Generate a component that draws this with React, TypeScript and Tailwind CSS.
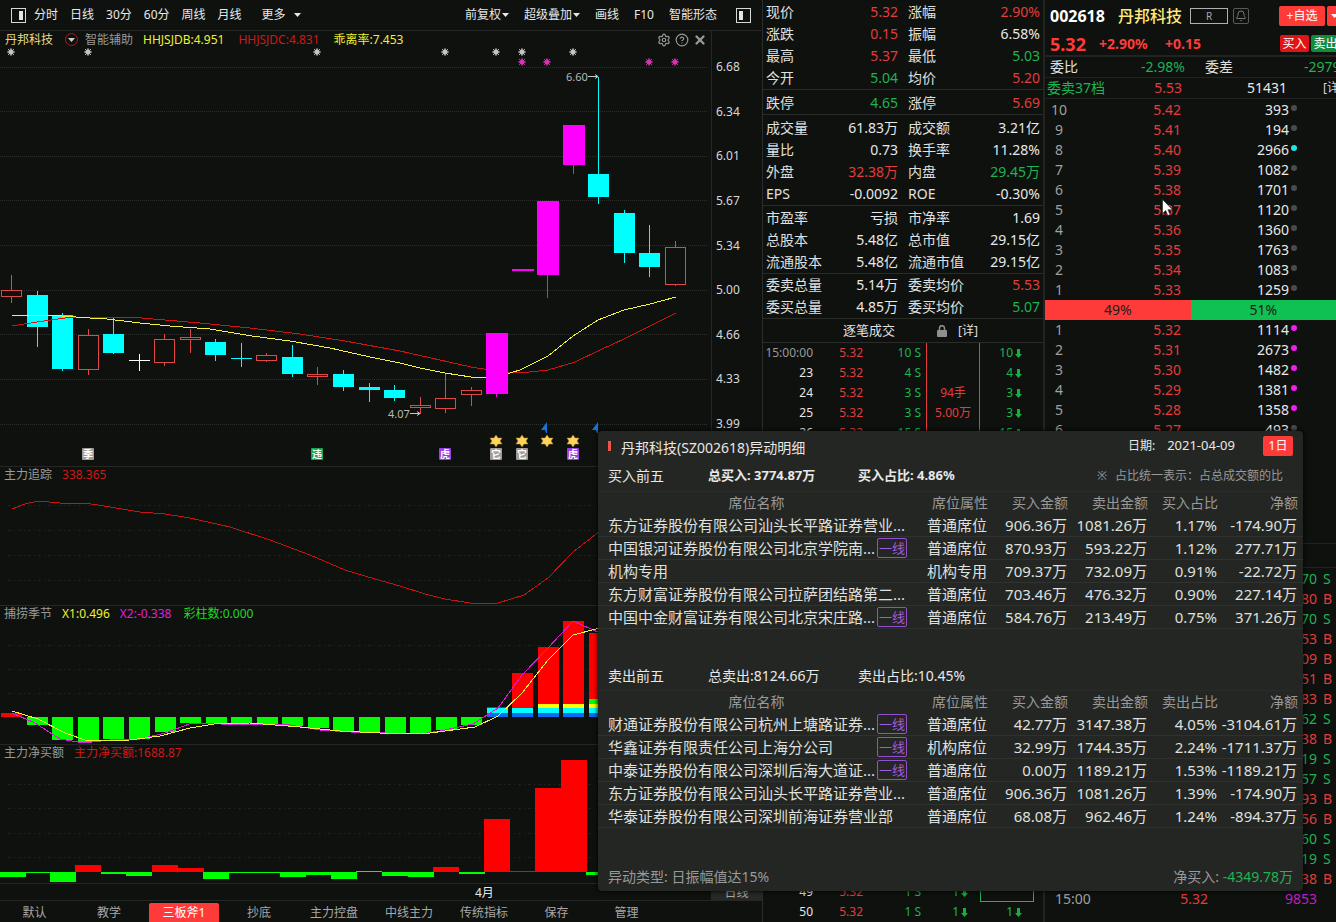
import { Bell, CircleHelp, Settings, X } from 'lucide-react';
import React from 'react';

type Candle = [x: number, top: number, bottom: number, high: number, low: number, kind: string];

const candles: Candle[] = [
  [1, 290, 297, 275, 303, 'up'],
  [27, 295, 327, 291, 347, 'down'],
  [52, 315, 369, 313, 371, 'down'],
  [78, 335, 370, 329, 375, 'up'],
  [103, 334, 353, 318, 354, 'down'],
  [129, 360, 361, 354, 371, 'flat'],
  [154, 339, 363, 334, 366, 'up'],
  [180, 337, 340, 329, 353, 'up'],
  [205, 342, 355, 339, 361, 'down'],
  [231, 358, 359, 343, 367, 'down'],
  [256, 355, 361, 353, 362, 'up'],
  [282, 357, 374, 345, 377, 'down'],
  [307, 374, 377, 367, 385, 'up'],
  [333, 374, 387, 370, 391, 'down'],
  [359, 387, 390, 383, 402, 'down'],
  [384, 390, 398, 385, 401, 'down'],
  [410, 405, 408, 397, 414, 'up'],
  [435, 398, 409, 374, 413, 'up'],
  [461, 390, 395, 387, 406, 'up'],
  [486, 333, 394, 333, 397, 'limit'],
  [512, 269, 271, 269, 271, 'limit'],
  [537, 201, 275, 201, 298, 'limit'],
  [563, 125, 165, 125, 174, 'limit'],
  [588, 174, 197, 77, 204, 'down'],
  [614, 213, 253, 210, 263, 'down'],
  [639, 253, 267, 225, 277, 'down'],
  [665, 247, 285, 241, 286, 'up'],
];

const candleColors: Record<string, string> = {
  up: '#e04848',
  down: '#00ffff',
  flat: '#ffffff',
  limit: '#ff00ff',
};

const priceLabels = ['6.68', '6.34', '6.01', '5.67', '5.34', '5.00', '4.66', '4.33', '3.99'];
const priceLines = [67, 111, 156, 200, 245, 290, 334, 379, 424];

// [x, y] of the bottom edge, bars hang from the zero line at 717
const greenBars = [
  [27, 725], [52, 740], [78, 742], [103, 739], [129, 739], [155, 732], [180, 723], [206, 723],
  [231, 723], [257, 724], [282, 726], [308, 728], [333, 731], [359, 733], [385, 733], [410, 733],
  [436, 730], [461, 725],
];

const redBars = [
  [487, 707], [512, 673], [538, 647], [563, 621], [589, 633],
];

// [x, top, bottom, isBuy]
const netBars = [
  [0, 872, 877, 0], [25, 872, 873, 0], [50, 872, 882, 0], [75, 865, 872, 1], [101, 872, 874, 0],
  [126, 872, 876, 0], [152, 865, 872, 1], [178, 868, 872, 1], [203, 872, 879, 0], [229, 872, 873, 0],
  [254, 872, 873, 0], [280, 872, 877, 0], [306, 872, 875, 0], [331, 872, 879, 0], [356, 871, 872, 0],
  [382, 872, 876, 0], [408, 872, 877, 0], [433, 867, 872, 1], [459, 872, 874, 0], [484, 819, 872, 1],
  [510, 871, 872, 1], [535, 788, 872, 1], [561, 760, 872, 1], [586, 872, 875, 0],
];

type Stat = [label: string, value: string, tone: string];

const R = 'text-[#e23c3c]';
const G = 'text-[#1fb352]';
const W = 'text-[#e8e8e8]';

const statGroups: { className: string; rows: [Stat, Stat][] }[] = [
  {
    className: 'pt-px',
    rows: [
      [['现价', '5.32', R], ['涨幅', '2.90%', R]],
      [['涨跌', '0.15', R], ['振幅', '6.58%', W]],
      [['最高', '5.37', R], ['最低', '5.03', G]],
      [['今开', '5.04', G], ['均价', '5.20', R]],
    ],
  },
  { className: 'pt-0.5', rows: [[['跌停', '4.65', G], ['涨停', '5.69', R]]] },
  {
    className: 'pt-0.5',
    rows: [
      [['成交量', '61.83万', W], ['成交额', '3.21亿', W]],
      [['量比', '0.73', W], ['换手率', '11.28%', W]],
      [['外盘', '32.38万', R], ['内盘', '29.45万', G]],
      [['EPS', '-0.0092', W], ['ROE', '-0.30%', W]],
    ],
  },
  {
    className: 'pt-px',
    rows: [
      [['市盈率', '亏损', W], ['市净率', '1.69', W]],
      [['总股本', '5.48亿', W], ['总市值', '29.15亿', W]],
      [['流通股本', '5.48亿', W], ['流通市值', '29.15亿', W]],
    ],
  },
  {
    className: '',
    rows: [
      [['委卖总量', '5.14万', W], ['委卖均价', '5.53', R]],
      [['委买总量', '4.85万', W], ['委买均价', '5.07', G]],
    ],
  },
];

const GRAY = 'bg-[#4a4b4e]';
const CYAN = 'bg-[#1fe5e5]';
const PINK = 'bg-[#f01cf0]';

const asks = [
  ['10', '5.42', '393', GRAY],
  ['9', '5.41', '194', GRAY],
  ['8', '5.40', '2966', CYAN],
  ['7', '5.39', '1082', GRAY],
  ['6', '5.38', '1701', GRAY],
  ['5', '5.37', '1120', GRAY],
  ['4', '5.36', '1360', GRAY],
  ['3', '5.35', '1763', GRAY],
  ['2', '5.34', '1083', GRAY],
  ['1', '5.33', '1259', GRAY],
];

const bids = [
  ['1', '5.32', '1114', PINK],
  ['2', '5.31', '2673', PINK],
  ['3', '5.30', '1482', PINK],
  ['4', '5.29', '1381', PINK],
  ['5', '5.28', '1358', PINK],
  ['6', '5.27', '493', GRAY],
];

const trades = [
  ['70', 'S'], ['80', 'B'], ['70', 'S'], ['53', 'B'], ['09', 'B'], ['51', 'B'], ['83', 'B'], ['62', 'S'],
  ['38', 'B'], ['19', 'S'], ['57', 'S'], ['93', 'B'], ['56', 'B'], ['60', 'S'], ['19', 'S'], ['38', 'B'],
];

const ticks = [
  ['15:00:00', '10', ''],
  ['23', '4', ''],
  ['24', '3', '94手'],
  ['25', '3', '5.00万'],
  ['26', '15', ''],
];

type Seat = { name: string; tag?: boolean; kind: string; cells: string[] };

const buySeats: Seat[] = [
  { name: '东方证券股份有限公司汕头长平路证券营业...', kind: '普通席位', cells: ['906.36万', '1081.26万', '1.17%', '-174.90万'] },
  { name: '中国银河证券股份有限公司北京学院南...', tag: true, kind: '普通席位', cells: ['870.93万', '593.22万', '1.12%', '277.71万'] },
  { name: '机构专用', kind: '机构专用', cells: ['709.37万', '732.09万', '0.91%', '-22.72万'] },
  { name: '东方财富证券股份有限公司拉萨团结路第二...', kind: '普通席位', cells: ['703.46万', '476.32万', '0.90%', '227.14万'] },
  { name: '中国中金财富证券有限公司北京宋庄路...', tag: true, kind: '普通席位', cells: ['584.76万', '213.49万', '0.75%', '371.26万'] },
];

const sellSeats: Seat[] = [
  { name: '财通证券股份有限公司杭州上塘路证券...', tag: true, kind: '普通席位', cells: ['42.77万', '3147.38万', '4.05%', '-3104.61万'] },
  { name: '华鑫证券有限责任公司上海分公司', tag: true, kind: '机构席位', cells: ['32.99万', '1744.35万', '2.24%', '-1711.37万'] },
  { name: '中泰证券股份有限公司深圳后海大道证...', tag: true, kind: '普通席位', cells: ['0.00万', '1189.21万', '1.53%', '-1189.21万'] },
  { name: '东方证券股份有限公司汕头长平路证券营业...', kind: '普通席位', cells: ['906.36万', '1081.26万', '1.39%', '-174.90万'] },
  { name: '华泰证券股份有限公司深圳前海证券营业部', kind: '普通席位', cells: ['68.08万', '962.46万', '1.24%', '-894.37万'] },
];

const Caret = () => (
  <svg className="h-1 w-[7px] shrink-0" viewBox="0 0 7 4">
    <path d="M0 0h7L3.5 4z" fill="currentColor" />
  </svg>
);

const DownArrow = () => (
  <svg className="ml-0.5 inline-block h-[9px] w-[7px] align-[-1px]" viewBox="0 0 7 9">
    <path d="M2 0h3v5h2L3.5 9 0 5h2z" fill="#12b23a" />
  </svg>
);

const PanelIcon = ({ side }: { side: 'left' | 'right' }) => (
  <svg className="h-[15px] w-[15px] shrink-0" viewBox="0 0 15 15">
    <rect x="0.5" y="0.5" width="14" height="14" fill="none" stroke="#d8d8d8" />
    <rect x={side === 'right' ? 8 : 3} y="3" width="4" height="9" fill="#e4e4e4" />
  </svg>
);

const Toolbar = () => (
  <div className="flex h-[31px] items-center justify-between border-b border-[#242724] pr-[11px] pl-[11px] text-xs text-[#e8e8e8]">
    <div className="flex items-center gap-3">
      <div className="flex items-center gap-2">
        <button aria-label="左侧栏">
          <PanelIcon side="right" />
        </button>
        <button>分时</button>
      </div>
      <button>日线</button>
      <button>30分</button>
      <button>60分</button>
      <button>周线</button>
      <button>月线</button>
      <button className="ml-2 flex items-center gap-2">
        更多 <Caret />
      </button>
    </div>
    <div className="flex items-center gap-[15px]">
      <button className="flex items-center gap-px">
        前复权
        <Caret />
      </button>
      <button className="flex items-center gap-px">
        超级叠加
        <Caret />
      </button>
      <button>画线</button>
      <button>F10</button>
      <button>智能形态</button>
      <button aria-label="右侧栏" className="ml-1">
        <PanelIcon side="left" />
      </button>
    </div>
  </div>
);

const Sparkle = ({ x, y, color }: { x: number; y: number; color: string }) => (
  <g stroke={color} fill={color}>
    <circle cx={x} cy={y} r="2.2" />
    <path
      d={`M${x - 4} ${y}h8M${x} ${y - 4}v8M${x - 3} ${y - 3}l6 6M${x + 3} ${y - 3}l-6 6`}
      strokeWidth="0.9"
    />
  </g>
);

const Badge = ({ x, fill, text }: { x: number; fill: string; text: string }) => (
  <g>
    <rect x={x - 6} y="448" width="12" height="12" rx="1" fill={fill} />
    <text x={x} y="458" fontSize="10" fontWeight="700" textAnchor="middle" fill="#ffffff">
      {text}
    </text>
  </g>
);

const CandleShape = ({ candle }: { candle: Candle }) => {
  const [x, top, bottom, high, low, kind] = candle;
  const color = candleColors[kind];
  const width = kind === 'limit' ? 22 : 21;
  const mid = x + 10;

  if (kind === 'up') {
    return (
      <g>
        <rect x={mid} y={high} width="1" height={top - high} fill={color} />
        <rect x={mid} y={bottom} width="1" height={low - bottom} fill={color} />
        <rect x={x + 0.5} y={top + 0.5} width="20" height={bottom - top - 1} fill="none" stroke={color} />
      </g>
    );
  }
  return (
    <g fill={color}>
      <rect x={mid} y={high} width="1" height={low - high} />
      <rect x={x} y={top} width={width} height={bottom - top} />
    </g>
  );
};

const Curve = ({ points, color }: { points: string; color: string }) => (
  <polyline points={points} fill="none" stroke={color} shapeRendering="crispEdges" />
);

const PriceChart = () => (
  <svg className="h-[418px] w-full" viewBox="0 48 700 418" preserveAspectRatio="xMinYMin meet">
    {priceLines.map((y) => (
      <line key={y} x1="0" x2="708" y1={y + 0.5} y2={y + 0.5} stroke="#2b2e2b" strokeDasharray="1 1" />
    ))}
    {[11, 88, 317, 445, 496, 522, 573].map((x) => (
      <Sparkle key={x} x={x} y={52} color="#c4c4c4" />
    ))}
    {[522, 547, 649, 675].map((x) => (
      <Sparkle key={x} x={x} y={62} color="#d535b0" />
    ))}
    {candles.filter((c) => c[5] !== 'limit').map((c) => (
      <CandleShape key={c[0]} candle={c} />
    ))}
    <Curve
      points="12,326 37,322 65,318 90,317 130,317 165,320 200,323 250,328 300,334 345,341 400,351 440,360 471,367 496,371 520,373 548,370 575,362 600,350 624,339 650,326 676,313"
      color="#d01414"
    />
    <Curve
      points="12,316 27,315 48,315 90,318 107,319 140,323 170,326 210,329 252,336 290,341 330,348 370,357 400,363 420,368 445,373 471,377 496,377 520,370 548,356 573,336 598,320 624,310 650,304 676,297"
      color="#f4f43c"
    />
    {candles.filter((c) => c[5] === 'limit').map((c) => (
      <CandleShape key={c[0]} candle={c} />
    ))}
    <g fill="#b8b8b8" fontSize="11">
      <text x="566" y="81">6.60</text>
      <text x="388" y="418">4.07</text>
    </g>
    <g stroke="#c8c8c8" fill="none">
      <path d="M588 76.5h10M595 74.5l3 2-3 2" />
      <path d="M410 413.5h10M417 411.5l3 2-3 2" />
    </g>
    {[547, 598].map((x) => (
      <path key={x} d={`M${x} 422l-6 8h4l1 3h1z`} fill="#1673e0" />
    ))}
    {[496, 522, 547, 573].map((x) => (
      <path
        key={x}
        d={`M${x} 435l2 3h4l-2 3 2 3h-4l-2 3-2-3h-4l2-3-2-3h4z`}
        fill="#ffd45a"
        stroke="#b08a30"
        strokeWidth="0.5"
      />
    ))}
    <Badge x={88} fill="#9c9c9c" text="季" />
    <Badge x={317} fill="#12a84a" text="违" />
    <Badge x={445} fill="#9c3fe0" text="虎" />
    <Badge x={496} fill="#9c9c9c" text="它" />
    <Badge x={522} fill="#9c9c9c" text="它" />
    <Badge x={573} fill="#9c3fe0" text="虎" />
  </svg>
);

const SubGrid = ({ lines }: { lines: number[] }) => (
  <>
    {lines.map((y) => (
      <line key={y} x1="8" x2="704" y1={y + 0.5} y2={y + 0.5} stroke="#1e211e" strokeDasharray="3 3 1 3" />
    ))}
  </>
);

const SubPanel = ({ label, children }: { label: React.ReactNode; children: React.ReactNode }) => (
  <section className="flex h-[139px] border-b border-[#242724]">
    <div className="min-w-0 flex-1 border-r border-[#242724]">
      <div className="flex h-3.5 gap-2.5 pl-1 text-xs leading-[15px] text-[#9a9a9a]">{label}</div>
      {children}
    </div>
    <div className="w-[50px]" />
  </section>
);

const ChartColumn = () => (
  <main className="flex min-w-0 flex-1 flex-col border-r border-[#2b2d2b]">
    <Toolbar />
    <section className="flex h-[436px] border-b border-[#242724]">
      <div className="min-w-0 flex-1 border-r border-[#242724]">
        <div className="flex h-[17px] items-center justify-between pr-1 pl-[5px] text-xs leading-4 text-[#9a9a9a]">
          <div className="flex items-center gap-2.5 whitespace-nowrap">
            <span className="text-[#e6d98a]">丹邦科技</span>
            <div className="ml-0.5 flex items-center gap-[7px]">
              <button
                aria-label="切换指标"
                className="flex h-[13px] w-[13px] items-center justify-center rounded-full border border-[#9c2020] text-[#d0d0d0]"
              >
                <Caret />
              </button>
              <span>智能辅助</span>
            </div>
            <span className="text-[#f0f030]">HHJSJDB:4.951</span>
            <span className="ml-1 text-[#d01818]">HHJSJDC:4.831</span>
            <span className="ml-1 text-[#f0f030]">乖离率:7.453</span>
          </div>
          <div className="flex gap-1 text-[#989898]">
            <button aria-label="设置"><Settings size={14} /></button>
            <button aria-label="帮助"><CircleHelp size={14} /></button>
            <button aria-label="关闭"><X size={14} strokeWidth={4} /></button>
          </div>
        </div>
        <PriceChart />
      </div>
      <div className="flex w-[50px] flex-col justify-between pt-7 pb-[34px] pl-1 text-xs leading-4 text-[#d8d8d8]">
        {priceLabels.map((p) => (
          <span key={p}>{p}</span>
        ))}
      </div>
    </section>

    <SubPanel
      label={
        <>
          <span>主力追踪</span>
          <span className="text-[#d01818]">338.365</span>
        </>
      }
    >
      <svg className="h-[124px] w-full" viewBox="0 481 700 124" preserveAspectRatio="xMinYMin meet">
        <SubGrid lines={[505, 530, 555, 580]} />
        <Curve
          points="12,509 25,504 38,501 60,503 85,503 110,507 140,512 165,514 190,518 230,527 270,540 310,555 345,570 375,579 400,586 425,594 445,599 470,603 498,603 524,595 548,578 573,552 600,531"
          color="#c41414"
        />
      </svg>
    </SubPanel>

    <SubPanel
      label={
        <>
          <span>捕捞季节</span>
          <span className="text-[#f0f030]">X1:0.496</span>
          <span className="text-[#e01ce0]">X2:-0.338</span>
          <span className="ml-0.5 text-[#20d820]">彩柱数:0.000</span>
        </>
      }
    >
      <svg className="h-[124px] w-full" viewBox="0 620 700 124" preserveAspectRatio="xMinYMin meet">
        <SubGrid lines={[645, 669, 693]} />
        <rect x="1" y="713" width="21" height="4" fill="#ff0000" />
        {greenBars.map(([x, y]) => (
          <rect key={x} x={x} y="717" width="21" height={y - 717} fill="#00ff00" />
        ))}
        {redBars.map(([x, y]) => (
          <g key={x}>
            <rect x={x} y={y} width="21" height={717 - y} fill="#ff0000" />
            {x > 580 && <rect x={x} y="699" width="21" height="5" fill="#00ff00" />}
            {x > 530 && <rect x={x} y="704" width="21" height="4" fill="#ffff00" />}
            <rect x={x} y="708" width="21" height="5" fill="#00ffff" />
            <rect x={x} y="713" width="21" height="4" fill="#0a6cf0" />
          </g>
        ))}
        <Curve
          points="12,713 35,723 60,739 78,742 92,742 110,740 140,739 165,733 192,723 220,724 290,725 320,730 350,732 385,733 420,734 440,731 473,724 498,708 522,675 548,648 573,621 600,633"
          color="#d81cd8"
        />
        <Curve
          points="12,711 38,719 65,733 88,741 130,740 160,736 190,728 214,724 250,723 300,727 340,731 380,733 430,733 475,727 498,716 522,693 548,660 573,635 600,628"
          color="#f4f43c"
        />
      </svg>
    </SubPanel>

    <SubPanel
      label={
        <>
          <span>主力净买额</span>
          <span className="text-[#d01818]">主力净买额:1688.87</span>
        </>
      }
    >
      <svg className="h-[124px] w-full" viewBox="0 759 700 124" preserveAspectRatio="xMinYMin meet">
        <SubGrid lines={[784, 808, 833, 857]} />
        {netBars.map(([x, top, bottom, buy]) => (
          <rect key={x} x={x} y={top} width="26" height={bottom - top} fill={buy ? '#ff0000' : '#00ff00'} />
        ))}
      </svg>
    </SubPanel>

    <div className="flex h-[17px] items-end border-b border-[#242724] text-xs leading-[14px]">
      <div className="min-w-0 flex-1 pl-[475px] text-[#e8e8e8]">4月</div>
      <button className="w-[51px] bg-[#262926] text-[#a8a8a8]">日线</button>
    </div>
    <nav className="flex gap-[5px] pt-0.5 text-xs leading-[19px] text-[#a8a8a8]">
      <button className="w-[69px]">默认</button>
      <button className="w-[70px]">教学</button>
      <button className="w-[70px] rounded-t-xs bg-[#ff3b3a] text-white">三板斧1</button>
      <button className="w-[70px]">抄底</button>
      <button className="w-[70px]">主力控盘</button>
      <button className="w-[70px]">中线主力</button>
      <button className="w-[70px]">传统指标</button>
      <button className="w-[65px]">保存</button>
      <button className="w-[65px]">管理</button>
    </nav>
  </main>
);

const TickCols = () => (
  <colgroup>
    <col className="w-[50px]" />
    <col className="w-[50px]" />
    <col className="w-[63px]" />
    <col className="w-[54px]" />
    <col className="w-[54px]" />
    <col />
  </colgroup>
);

const StatsColumn = () => (
  <section className="flex w-[282px] shrink-0 flex-col border-r-2 border-[#222422]">
    {statGroups.map((group, i) => (
      <dl key={i} className={`border-b border-[#2a2c2a] text-sm leading-[22px] ${group.className}`}>
        {group.rows.map(([a, b]) => (
          <div key={a[0]} className="flex gap-2.5 pr-[3px] pl-[3px]">
            <div className="flex w-[132px] justify-between">
              <dt className="text-[#e0e0e0]">{a[0]}</dt>
              <dd className={a[2]}>{a[1]}</dd>
            </div>
            <div className="flex flex-1 justify-between">
              <dt className="text-[#e0e0e0]">{b[0]}</dt>
              <dd className={b[2]}>{b[1]}</dd>
            </div>
          </div>
        ))}
      </dl>
    ))}
    <div className="flex h-6 items-center border-b border-[#2a2c2a] pl-20 text-[13px] text-[#e0e0e0]">
      <h2>逐笔成交</h2>
      <svg className="ml-[42px] h-3 w-2.5" viewBox="0 0 10 12">
        <path d="M2.5 6V3.2a2.5 2.5 0 0 1 5 0V6" fill="none" stroke="#8f8f8f" strokeWidth="1.5" />
        <rect y="5" width="10" height="7" rx="1" fill="#8f8f8f" />
      </svg>
      <a href="#ticks" className="ml-[11px] text-xs">[详]</a>
    </div>
    <table id="ticks" className="w-full table-fixed border-separate border-spacing-0 text-right text-xs leading-5 whitespace-nowrap">
      <TickCols />
      <tbody>
        {ticks.map(([time, volume, note], i) => (
          <tr key={time}>
            <td className={`p-0 ${i === 0 ? 'text-[#9a9a9a]' : 'text-[#e8e8e8]'}`}>{time}</td>
            <td className={`p-0 ${R}`}>5.32</td>
            <td className={`p-0 pr-[5px] ${G}`}>{volume} S</td>
            <td className={`border-x border-[#e23c3c] p-0 text-center ${R}`}>{note}</td>
            <td className={`p-0 pr-3 ${G}`}>
              {volume}
              <DownArrow />
            </td>
            <td />
          </tr>
        ))}
      </tbody>
    </table>
    <div className="flex-1" />
    <table className="w-full table-fixed border-separate border-spacing-0 text-right text-xs leading-5 whitespace-nowrap">
      <TickCols />
      <tbody>
        {['49', '50'].map((time) => (
          <tr key={time}>
            <td className="p-0 text-[#e8e8e8]">{time}</td>
            <td className={`p-0 ${R}`}>5.32</td>
            <td className={`p-0 pr-[5px] ${G}`}>1 S</td>
            <td className={`p-0 pr-3 ${G}`}>
              1<DownArrow />
            </td>
            {time === '49' ? (
              <td className="border-x border-b border-[#1fb352] p-0" />
            ) : (
              <td className={`p-0 pr-3 ${G}`}>
                1<DownArrow />
              </td>
            )}
            <td />
          </tr>
        ))}
      </tbody>
    </table>
  </section>
);

const Ladder = ({ rows }: { rows: string[][] }) => (
  <table className="w-full table-fixed text-sm leading-5">
    <colgroup>
      <col className="w-7" />
      <col className="w-[108px]" />
      <col className="w-[108px]" />
      <col />
    </colgroup>
    <tbody>
      {rows.map(([level, price, volume, dot]) => (
        <tr key={level}>
          <td className="p-0 text-center text-[#a0a0a0]">{level}</td>
          <td className={`p-0 text-right ${R}`}>{price}</td>
          <td className={`p-0 text-right ${W}`}>{volume}</td>
          <td className="p-0 pl-0.5">
            <div className={`-mt-1 h-1.5 w-1.5 rounded-full ${dot}`} />
          </td>
        </tr>
      ))}
    </tbody>
  </table>
);

const QuoteColumn = () => (
  <aside className="w-[291px] shrink-0 overflow-hidden whitespace-nowrap">
    <div className="flex h-8 items-center pl-[5px]">
      <span className="w-[68px] shrink-0 text-base font-bold text-white">002618</span>
      <h1 className="w-[72px] shrink-0 text-base font-medium text-[#ffe97a]">丹邦科技</h1>
      <span className="flex h-4 w-[38px] shrink-0 items-center justify-center border border-[#b0b0b0] text-[10px] text-[#a8a8a8]">R</span>
      <button aria-label="提醒" className="ml-[5px] flex h-4 w-4 shrink-0 items-center justify-center rounded-xs border border-[#5a5a5a] text-[#777777]">
        <Bell size={12} />
      </button>
      <button className="ml-[30px] h-5 w-[46px] shrink-0 rounded-xs bg-[#ff3b3a] text-xs text-white">+自选</button>
      <button aria-label="更多自选" className="ml-0.5 flex h-5 w-4 shrink-0 items-center rounded-xs bg-[#ff3b3a] pl-1 text-white">
        <Caret />
      </button>
    </div>
    <div className="flex h-[25px] items-center border-b-2 border-[#222422] pl-[5px] font-bold text-[#ff3b3a]">
      <span className="w-[49px] shrink-0 text-lg leading-5">5.32</span>
      <span className="w-[66px] shrink-0 text-sm">+2.90%</span>
      <span className="w-[115px] shrink-0 text-sm">+0.15</span>
      <button className="h-[17px] w-[29px] shrink-0 rounded-xs bg-[#e01414] text-xs leading-4 font-normal text-white">买入</button>
      <button className="ml-0.5 h-[17px] w-[29px] shrink-0 rounded-xs bg-[#148a3c] text-xs leading-4 font-normal text-white">卖出</button>
    </div>
    <div className="flex h-[21px] border-b border-[#222422] pl-[5px] text-sm leading-5 text-[#e0e0e0]">
      <span className="w-14 shrink-0">委比</span>
      <span className={`w-[79px] shrink-0 text-right ${G}`}>-2.98%</span>
      <span className="ml-5 w-[99px] shrink-0">委差</span>
      <span className={`shrink-0 ${G}`}>-2979</span>
    </div>
    <div className={`flex h-[21px] border-b border-[#222422] pl-0.5 text-sm leading-5 ${G}`}>
      <span className="w-20 shrink-0">委卖37档</span>
      <span className={`w-[55px] shrink-0 text-right ${R}`}>5.53</span>
      <span className={`w-[105px] shrink-0 text-right ${W}`}>51431</span>
      <a href="#orders" className="ml-9 shrink-0 text-xs leading-5 text-[#d8d8d8]">[详]</a>
    </div>
    <div id="orders" className="pt-px">
      <Ladder rows={asks} />
    </div>
    <div className="flex text-center text-sm leading-5 text-[#1c1c1c]">
      <span className="flex-1 bg-[#ff3b3a]">49%</span>
      <span className="flex-1 bg-[#0fc152]">51%</span>
    </div>
    <div className="h-[224px] border-b border-[#222422]">
      <Ladder rows={bids} />
    </div>
    <div className="mb-px h-6 border-b border-[#222422]" />
    <table className="w-full table-fixed text-right text-sm leading-5">
      <colgroup>
        <col className="w-[100px]" />
        <col className="w-[63px]" />
        <col className="w-[109px]" />
        <col />
      </colgroup>
      <tbody>
        {trades.map(([volume, side], i) => (
          <tr key={i} className={side === 'S' ? G : R}>
            <td />
            <td />
            <td className="p-0">{volume}</td>
            <td className="p-0 pl-1.5 text-left">{side}</td>
          </tr>
        ))}
        <tr>
          <td className="p-0 pl-2.5 text-left text-[#a0a0a0]">15:00</td>
          <td className={`p-0 ${R}`}>5.32</td>
          <td className="p-0 text-[#c41cc4]">9853</td>
          <td />
        </tr>
      </tbody>
    </table>
  </aside>
);

const SeatTable = ({ ratioLabel, seats }: { ratioLabel: string; seats: Seat[] }) => (
  <table className="w-full table-fixed border-separate border-spacing-0 text-right text-[15px] whitespace-nowrap">
    <colgroup>
      <col />
      <col className="w-[65px]" />
      <col className="w-20" />
      <col className="w-20" />
      <col className="w-[70px]" />
      <col className="w-[85px]" />
    </colgroup>
    <thead className="text-sm leading-[22px] text-[#989998]">
      <tr>
        <th className="p-0 pr-2 text-center font-normal">席位名称</th>
        <th className="p-0 font-normal">席位属性</th>
        <th className="p-0 font-normal">买入金额</th>
        <th className="p-0 font-normal">卖出金额</th>
        <th className="p-0 font-normal">{ratioLabel}</th>
        <th className="p-0 pr-[5px] font-normal">净额</th>
      </tr>
    </thead>
    <tbody className="leading-[22px] text-[#dfe0df]">
      {seats.map((seat) => (
        <tr key={seat.name}>
          <td className="border-b border-[#303230] p-0 pl-2.5">
            <div className="flex w-[299px] items-center justify-between">
              <span>{seat.name}</span>
              {seat.tag && (
                <span className="h-5 w-[30px] rounded-xs border border-[#9450cc] text-center text-[13px] leading-[18px] text-[#a458e0]">
                  一线
                </span>
              )}
            </div>
          </td>
          <td className="border-b border-[#303230] p-0 pr-px">{seat.kind}</td>
          {seat.cells.map((cell, i) => (
            <td key={i} className={`border-b border-[#303230] p-0 ${i === 3 ? 'pr-1.5' : 'pr-px'}`}>
              {cell}
            </td>
          ))}
        </tr>
      ))}
    </tbody>
  </table>
);

const DetailWindow = () => (
  <div
    role="dialog"
    aria-labelledby="detail-title"
    className="absolute top-[431px] right-[33px] w-[705px] rounded-sm bg-[#242624] text-[#e8e8e8] shadow-[0_0_5px_#000]"
  >
    <div className="flex h-[30px] items-center pr-2.5 pl-2.5 text-xs">
      <span className="h-2.5 w-[3px] bg-[#ee5548]" />
      <h2 id="detail-title" className="ml-2.5 flex-1 pt-1 text-sm">丹邦科技(SZ002618)异动明细</h2>
      <span>日期:</span>
      <time className="mr-7 ml-3 text-[13px]">2021-04-09</time>
      <button className="h-5 w-[30px] rounded-xs bg-[#ff3b3a] text-white">1日</button>
    </div>
    <div className="flex h-[31px] items-center border-b border-[#292b29] pl-2.5 text-[13px]">
      <h3 className="w-[100px] text-sm">买入前五</h3>
      <strong className="w-[150px]">总买入: 3774.87万</strong>
      <strong className="flex-1">买入占比: 4.86%</strong>
      <p className="pr-5 text-xs text-[#989998]">
        <span className="mr-2">※</span>占比统一表示：占总成交额的比
      </p>
    </div>
    <SeatTable ratioLabel="买入占比" seats={buySeats} />
    <div className="mt-8 flex h-[30px] items-center border-b border-[#292b29] pl-2.5 text-sm">
      <h3 className="w-[100px]">卖出前五</h3>
      <span className="w-[150px]">总卖出:8124.66万</span>
      <span>卖出占比:10.45%</span>
    </div>
    <SeatTable ratioLabel="卖出占比" seats={sellSeats} />
    <div className="mt-[35px] flex h-7 items-center justify-between px-2.5 text-sm leading-[14px] text-[#989998]">
      <span>异动类型: 日振幅值达15%</span>
      <span>
        净买入: <span className={G}>-4349.78万</span>
      </span>
    </div>
  </div>
);

const App = () => {
  return (
    <div className="relative flex min-h-screen overflow-hidden bg-[#0e110e] font-['Noto_Sans','Noto_Sans_CJK_SC',sans-serif]">
      <ChartColumn />
      <StatsColumn />
      <QuoteColumn />
      <DetailWindow />
      <svg className="absolute top-[199px] right-[162px] h-[18px] w-3" viewBox="0 0 12 18">
        <path d="M.5.5v14l3.2-3 2.2 5 2.2-1-2.2-4.8h4.6z" fill="#ffffff" stroke="#222222" strokeWidth="0.6" />
      </svg>
    </div>
  );
};

export default App;
